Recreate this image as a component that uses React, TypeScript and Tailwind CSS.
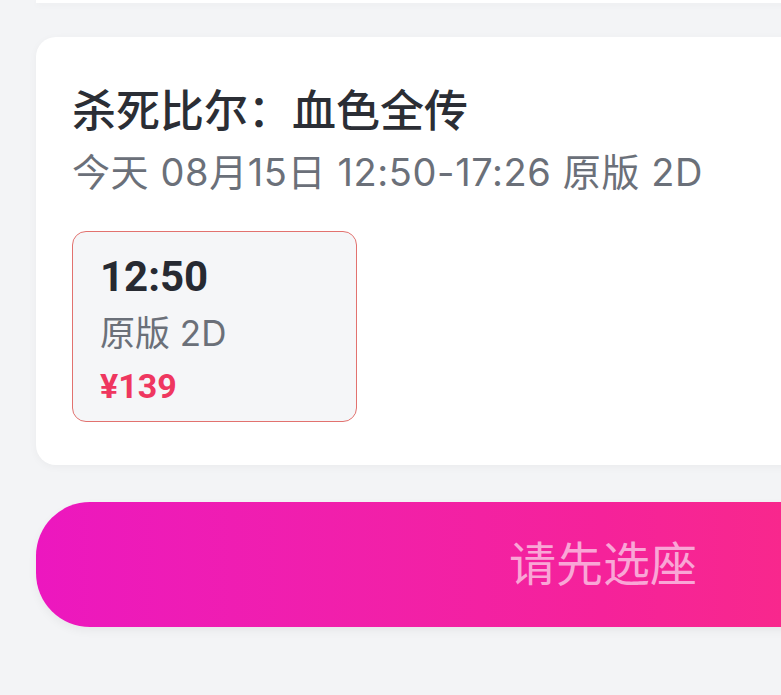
export default function App() {
  return (
    <div
      className="w-[781px] h-[695px] overflow-hidden bg-[#f3f4f6]"
      style={{ fontFamily: 'Inter, "Noto Sans CJK SC", sans-serif' }}
    >
      <div className="w-[1206px] px-[36px]">
        {/* bottom of previous card */}
        <div className="h-[3px] bg-white shadow-[0_2px_6px_rgba(0,0,0,0.04)]" />

        <div className="mt-[34px] rounded-[20px] bg-white shadow-[0_2px_8px_rgba(0,0,0,0.04)] px-[36px] pt-[44px] pb-[43px]">
          <h2 className="text-[44px] leading-[60px] font-medium text-[#2b2e35]">
            杀死比尔：血色全传
          </h2>
          <p className="mt-[6px] text-[38px] leading-[50px] tracking-[0.6px] text-[#6b7079]">
            今天 08月15日 12:50-17:26 原版 2D
          </p>

          <div className="mt-[34px] w-[285px] h-[191px] rounded-[14px] border-[1.5px] border-[#e2726f] bg-[#f5f6f8] px-[27px] pt-[20px]">
            <div
              className="text-[42px] leading-[50px] font-bold text-[#272a32]"
              style={{ fontFamily: 'Roboto, "Noto Sans CJK SC", sans-serif' }}
            >
              12:50
            </div>
            <div className="mt-[9px] text-[35px] leading-[44px] text-[#6b7079]">原版 2D</div>
            <div
              className="mt-[10px] text-[34px] leading-[42px] font-bold text-[#ef3760]"
              style={{ fontFamily: 'Roboto, "Noto Sans CJK SC", sans-serif' }}
            >
              ¥139
            </div>
          </div>
        </div>

        <button className="mt-[37px] w-full h-[125px] rounded-[54px] bg-gradient-to-r from-[#ec17bf] via-[#f5229a] to-[#ff2e6e] shadow-[0_4px_10px_rgba(0,0,0,0.05)] text-[47px] text-[#f9a6d6] flex items-center justify-center">
          请先选座
        </button>
      </div>
    </div>
  );
}
